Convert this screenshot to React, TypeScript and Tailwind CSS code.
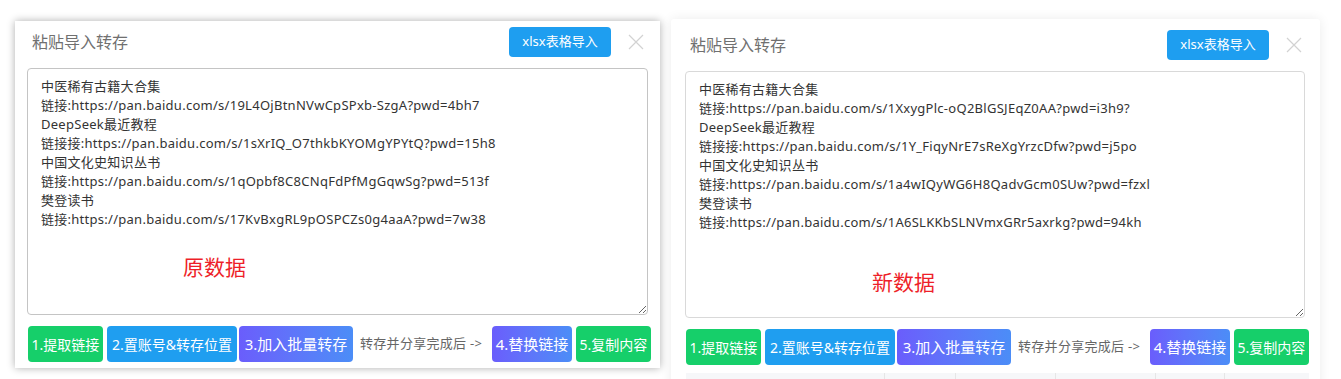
import React from "react";

const FONT = { fontFamily: '"Noto Sans", "Noto Sans CJK SC", sans-serif' };

const leftText = `中医稀有古籍大合集
链接:https://pan.baidu.com/s/19L4OjBtnNVwCpSPxb-SzgA?pwd=4bh7
DeepSeek最近教程
链接接:https://pan.baidu.com/s/1sXrIQ_O7thkbKYOMgYPYtQ?pwd=15h8
中国文化史知识丛书
链接:https://pan.baidu.com/s/1qOpbf8C8CNqFdPfMgGqwSg?pwd=513f
樊登读书
链接:https://pan.baidu.com/s/17KvBxgRL9pOSPCZs0g4aaA?pwd=7w38`;

const rightText = `中医稀有古籍大合集
链接:https://pan.baidu.com/s/1XxygPlc-oQ2BlGSJEqZ0AA?pwd=i3h9?
DeepSeek最近教程
链接接:https://pan.baidu.com/s/1Y_FiqyNrE7sReXgYrzcDfw?pwd=j5po
中国文化史知识丛书
链接:https://pan.baidu.com/s/1a4wIQyWG6H8QadvGcm0SUw?pwd=fzxl
樊登读书
链接:https://pan.baidu.com/s/1A6SLKKbSLNVmxGRr5axrkg?pwd=94kh`;

function CloseX() {
  return (
    <svg width="16" height="16" viewBox="0 0 16 16" className="shrink-0">
      <path d="M1 1 L15 15 M15 1 L1 15" stroke="#d2d2d2" strokeWidth="1.2" fill="none" />
    </svg>
  );
}

function Header({ variant }: { variant: "left" | "right" }) {
  const isLeft = variant === "left";
  return (
    <div
      className={
        isLeft
          ? "flex items-center h-[42px] pl-[17px] pr-[16px]"
          : "flex items-center h-[51px] pl-[19px] pr-[18px]"
      }
    >
      <span className="text-[16px] text-[#707070]">粘贴导入转存</span>
      <button className="ml-auto h-[30px] w-[102px] rounded-[4px] bg-[#1e9ef0] text-white text-[13px]">
        xlsx表格导入
      </button>
      <span className="ml-[17px] flex items-center">
        <CloseX />
      </span>
    </div>
  );
}

function ButtonRow({ variant }: { variant: "left" | "right" }) {
  const isLeft = variant === "left";
  const grad = "bg-gradient-to-r from-[#6a5dfc] to-[#4b8df7]";
  return (
    <div className={isLeft ? "flex items-center h-[36px] mt-[11px] pl-[13px]" : "flex items-center h-[36px] mt-[11px] pl-[15px]"}>
      <button className="h-[36px] w-[75px] rounded-[4px] bg-[#16cf6a] text-white text-[14px]">1.提取链接</button>
      <button className="h-[36px] w-[130px] ml-[4px] rounded-[4px] bg-[#1f9ef0] text-white text-[14px]">2.置账号&amp;转存位置</button>
      <button className={`h-[36px] w-[114px] ml-[2px] rounded-[4px] ${grad} text-white text-[15px]`}>3.加入批量转存</button>
      <span className="ml-[7px] w-[124px] text-[13px] tracking-[0.3px] text-[#666] whitespace-nowrap">转存并分享完成后 -&gt;</span>
      <button className={`h-[36px] w-[80px] ml-[8px] rounded-[4px] ${grad} text-white text-[15px]`}>4.替换链接</button>
      <button className="h-[36px] w-[75px] ml-[4px] rounded-[4px] bg-[#16cf6a] text-white text-[14px]">5.复制内容</button>
    </div>
  );
}

function Area({ text, label, labelPos, border }: { text: string; label: string; labelPos: string; border: string }) {
  return (
    <div className="relative h-[247px]">
      <textarea
        readOnly
        defaultValue={text}
        className={`w-full h-full block border ${border} rounded-[4px] pl-[13px] pr-[12px] pt-[8px] text-[13px] leading-[19px] tracking-[0.27px] text-[#333] outline-none bg-white`}
        style={FONT}
      />
      <span className={`absolute ${labelPos} text-[21px] leading-[24px] text-[#ee1f2a]`}>{label}</span>
    </div>
  );
}

export default function App() {
  return (
    <div className="w-[1341px] h-[379px] overflow-hidden bg-white flex items-start" style={FONT}>
      <div className="ml-[15px] mt-[21px] w-[645px] bg-white shadow-[0_0_8px_rgba(0,0,0,0.32)] pb-[6px] relative z-10">
        <Header variant="left" />
        <div className="mt-[5px] mx-[12px]">
          <Area text={leftText} label="原数据" labelPos="left-[156px] top-[187px]" border="border-[#c4c4c4]" />
        </div>
        <ButtonRow variant="left" />
      </div>
      <div className="ml-[11px] mt-[19px] w-[649px] h-[380px] bg-white shadow-[0_0_12px_rgba(0,0,0,0.08)] rounded-t-[3px]">
        <Header variant="right" />
        <div className="mt-[1px] ml-[14px] mr-[15px]">
          <Area text={rightText} label="新数据" labelPos="left-[187px] top-[199px]" border="border-[#d9d9d9]" />
        </div>
        <ButtonRow variant="right" />
        <div className="mt-[8px] ml-[15px] mr-[11px] h-[20px] bg-[#f6f7f9] flex">
          <div className="w-[199px] border-r border-[#e6e6e6]" />
          <div className="w-[71px] border-r border-[#e6e6e6]" />
          <div className="w-[100px] border-r border-[#e6e6e6]" />
          <div className="w-[100px] border-r border-[#e6e6e6]" />
          <div className="w-[69px] border-r border-[#e6e6e6]" />
        </div>
      </div>
    </div>
  );
}
